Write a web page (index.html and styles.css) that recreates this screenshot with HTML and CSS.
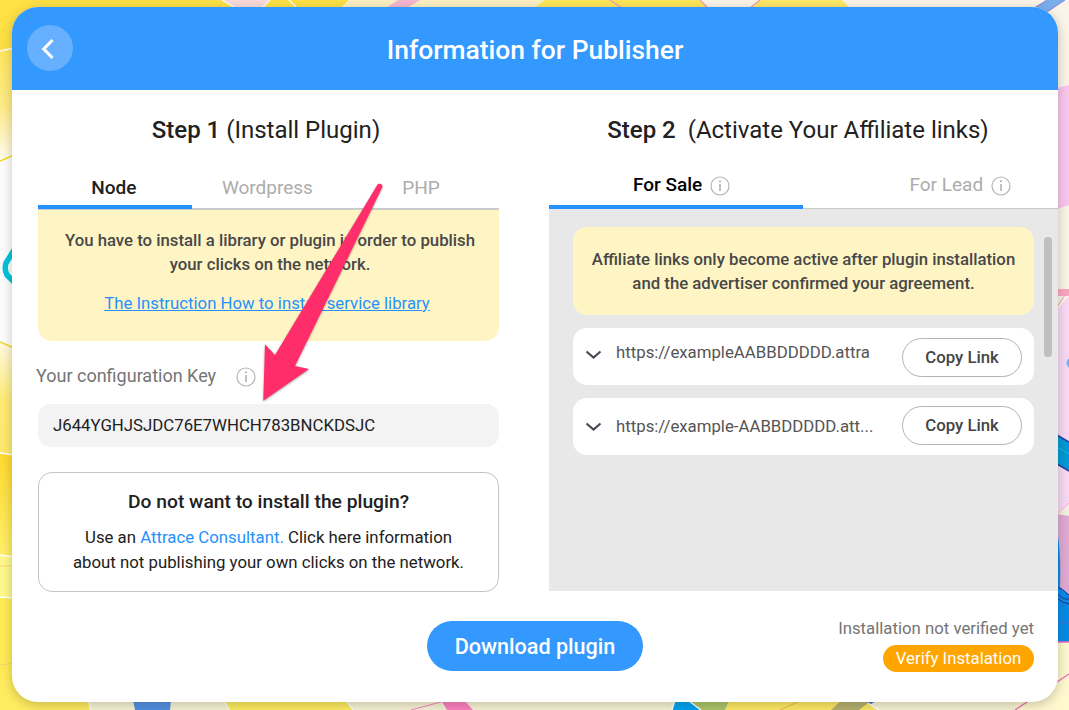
FILE: index.html
```html
<!DOCTYPE html>
<html lang="en">
<head>
<meta charset="utf-8">
<title>Information for Publisher</title>
<link rel="stylesheet" href="styles.css">
</head>
<body>
<svg class="backdrop" viewBox="0 0 1069 710" aria-hidden="true">
  <defs>
    <linearGradient id="sun" x1="0" y1="0" x2="0" y2="1"><stop offset="0" stop-color="#ffe65c"/><stop offset=".5" stop-color="#ffec86"/><stop offset="1" stop-color="#fffdf0"/></linearGradient>
    <linearGradient id="dawn" x1="0" y1="0" x2="0" y2="1"><stop offset="0" stop-color="#fffbe2"/><stop offset=".5" stop-color="#ffec78"/><stop offset="1" stop-color="#ffe96b"/></linearGradient>
    <linearGradient id="amber" x1="0" y1="0" x2="0" y2="1"><stop offset="0" stop-color="#ffd92e"/><stop offset="1" stop-color="#fff06a"/></linearGradient>
  </defs>
  <rect width="1069" height="710" fill="#fbf4e9"/>
  <path d="M0 0H350V20H40V48L0 51Z" fill="#ffe145"/>
  <path d="M0 51L14 48V155L0 161Z" fill="url(#sun)"/>
  <path d="M0 51L14 48" stroke="#fff" stroke-width="1.4"/>
  <path d="M0 161L14 155V348L0 342Z" fill="#fdfdfd"/>
  <path d="M0 342L14 348V455L0 452Z" fill="url(#dawn)"/>
  <path d="M0 161L14 155M0 342L14 348" stroke="#f4da24" stroke-width="1.6"/>
  <path d="M0 453L14 455V557L0 555Z" fill="url(#amber)"/>
  <path d="M0 555L14 557V598L0 597Z" fill="#fff98c"/>
  <path d="M0 597L14 598V680L40 702H90V710H0Z" fill="#ffed57"/>
  <path d="M0 453L14 455M0 555L14 557M0 597L14 598" stroke="#fff" stroke-width="1.6"/>
  <path d="M0 566L14 566M0 665L14 663" stroke="#ffc66f" stroke-width=".7"/>
  <path d="M16 247L6 263Q4 269 7 275L16 284" fill="none" stroke="#00c4dd" stroke-width="5.5"/>
  <path d="M222 0H270L262 8H234Z" fill="#fcd9da"/>
  <path d="M222 0L236 8M270 0L262 8M289 0L297 8M350 0L342 8" stroke="#fff" stroke-width="1.4"/>
  <path d="M350 0H545L534 8H342Z" fill="#fdf0c2"/>
  <path d="M398 0H420L407 8H386Z" fill="#f7b7cf"/>
  <path d="M545 0H700L708 8H534Z" fill="#ffe75a"/>
  <path d="M760 0H842L850 8H750Z" fill="#ffe968"/>
  <path d="M610 0L622 8M700 0L708 8M760 0L750 8" stroke="#ef9ab8" stroke-width="1.2"/>
  <path d="M1047 0H1065L1047 12L1033 8Z" fill="#78aeea"/>
  <path d="M1047 0L1033 9M1065 0L1047 12" stroke="#8b7fe0"/>
  <path d="M1057 88L1069 85V205L1057 209Z" fill="#fbc5ef"/>
  <path d="M1057 310L1069 296V530H1057Z" fill="#f8daf6"/>
  <path d="M1057 289H1069V296H1057Z" fill="#ffa6c4"/>
  <path d="M1057 307L1069 289" stroke="#f69abf"/>
  <circle cx="1072" cy="363" r="5.5" fill="#77b1ff"/>
  <path d="M1057 435L1069 442V471L1057 464Z" fill="#0099d6"/>
  <path d="M1057 435L1069 442M1057 464L1069 471" stroke="#293aa5" stroke-width="1.5"/>
  <path d="M1057 447L1069 454" stroke="#12b9df"/>
  <path d="M1057 514H1069V642H1057Z" fill="#dfaad4"/>
  <path d="M1057 514L1069 504V516L1057 514Z" fill="#f5f1e2"/>
  <path d="M1057 514L1069 503" stroke="#ffacd6"/>
  <path d="M1057 530Q1061 550 1060 587L1069 595V642H1057Z" fill="#078ae8"/>
  <path d="M1057 587Q1062 588 1069 595M1057 593Q1062 600 1069 599M1057 598Q1062 603 1069 604" fill="none" stroke="#26318f"/>
  <path d="M1057 623H1069" stroke="#3877d8"/>
  <path d="M1057 642H1069V710H1000V700H1040Z" fill="#fff9d0"/>
  <path d="M0 700H1015V710H0Z" fill="#f8f4d7"/>
  <path d="M1057 642H1069M1069 674L1015 710" stroke="#f36bc2" stroke-width="1.3"/>
  <path d="M0 680H14L40 700H88L91 710H0ZM224 700H346L353 710H228Z" fill="#ffed60"/>
  <path d="M88 700L91 710M224 700L229 710M346 700L353 710" stroke="#fff" stroke-width="1.5"/>
  <path d="M133 700H171L170 710H135Z" fill="#508fe5"/>
  <path d="M441 700H464L473 710H447Z" fill="#ff80c1"/>
  <path d="M411 710L441 702" stroke="#ff80c1"/>
  <path d="M675 700H689L701 710H672Z" fill="#00a3f3"/>
  <path d="M689 700H730L725 710H701Z" fill="#abc66a"/>
  <path d="M730 700H866L878 710H725Z" fill="#ffea64"/>
  <path d="M675 700L672 710M689 701L701 710M865 701L879 710" stroke="#fff" stroke-width="1.5"/>
  <path d="M842 700H866L868 703L859 710H831Z" fill="#b5b070"/>
  <path d="M865 701H876L871 704Z" fill="#5868ca"/>
  <path d="M780 710L800 701" stroke="#f2b45d"/>
</svg>

<main class="card">
  <header class="card-header">
    <button class="back" aria-label="Back">
      <svg width="46" height="46" viewBox="0 0 46 46"><path d="M25.500 15L16.800 24L25.500 33" fill="none" stroke="#fff" stroke-width="3.200"/></svg>
    </button>
    <h1 class="title">Information for Publisher</h1>
  </header>

  <div class="steps">
    <section class="step step-install">
      <h2 class="step-title"><b>Step 1</b> (Install Plugin)</h2>
      <nav class="tabs tabs-install">
        <a class="tab active">Node</a><a class="tab">Wordpress</a><a class="tab">PHP</a>
      </nav>
      <div class="notice notice-install">
        <p>You have to install a library or plugin in order to publish<br>your clicks on the network.</p>
        <a class="guide">The Instruction How to install service library</a>
      </div>
      <div class="key-label"><span>Your configuration Key</span>
        <svg class="info" viewBox="0 0 20 20"><circle cx="10" cy="10" r="9"/><path d="M10 8V15"/><circle class="dot" cx="10" cy="5.300" r="1.100"/></svg>
      </div>
      <div class="key">J644YGHJSJDC76E7WHCH783BNCKDSJC</div>
      <div class="consult">
        <h3>Do not want to install the plugin?</h3>
        <p>Use an <a>Attrace Consultant.</a> Click here information<br>about not publishing your own clicks on the network.</p>
      </div>
    </section>

    <section class="step step-activate">
      <h2 class="step-title"><b>Step 2</b>&nbsp; (Activate Your Affiliate links)</h2>
      <nav class="tabs tabs-activate">
        <a class="tab active">For Sale <svg class="info" viewBox="0 0 20 20"><circle cx="10" cy="10" r="9"/><path d="M10 8V15"/><circle class="dot" cx="10" cy="5.300" r="1.100"/></svg></a>
        <a class="tab lead">For Lead <svg class="info" viewBox="0 0 20 20"><circle cx="10" cy="10" r="9"/><path d="M10 8V15"/><circle class="dot" cx="10" cy="5.300" r="1.100"/></svg></a>
      </nav>
      <div class="panel">
        <div class="links">
          <div class="notice notice-activate"><p>Affiliate links only become active after plugin installation<br>and the advertiser confirmed your agreement.</p></div>
          <div class="link-row first">
            <svg class="chevron" viewBox="0 0 16 10"><path d="M1 1.500L8 7.500L15 1.500"/></svg>
            <span class="url">https://exampleAABBDDDDD.attra</span>
            <button class="copy">Copy Link</button>
          </div>
          <div class="link-row second">
            <svg class="chevron" viewBox="0 0 16 10"><path d="M1 1.500L8 7.500L15 1.500"/></svg>
            <span class="url">https://example-AABBDDDDD.att...</span>
            <button class="copy">Copy Link</button>
          </div>
        </div>
        <div class="scroll-thumb"></div>
      </div>
    </section>
  </div>

  <footer class="card-footer">
    <button class="download">Download plugin</button>
    <div class="status">
      <span class="status-text">Installation not verified yet</span>
      <button class="verify">Verify Instalation</button>
    </div>
  </footer>
</main>

<svg class="pointer" viewBox="0 0 122 220" aria-hidden="true">
  <path class="arrow" d="M117.300 5C118.800 2.300 123.300 4 122.300 7.300L35 186L49 189L3.300 220.700L5 164.300L15 175Z"/>
</svg>
</body>
</html>
```

FILE: styles.css
```css
* { box-sizing: border-box; }
body { margin: 0; width: 1069px; height: 710px; overflow: hidden; position: relative; padding: 7px 11px 0 12px; font-family: Roboto, sans-serif; color: #212121; }
h1, h2, h3, p { margin: 0; font-weight: 400; }
button { font: inherit; border: 0; padding: 0; }
.backdrop { position: absolute; left: 0; top: 0; width: 1069px; height: 710px; }
.card { position: relative; width: 1046px; height: 695px; border-radius: 26px; background: #fff; overflow: hidden; box-shadow: 0 3px 12px rgba(40, 40, 20, .26); }
.card-header { display: flex; align-items: center; height: 83px; background: #3399ff; padding: 0 61px 0 15px; }
.back { width: 46px; height: 46px; border-radius: 50%; background: #66b0ff; margin-top: -1px; }
.back svg { display: block; }
.title { flex: 1; text-align: center; color: #fff; font-size: 26.400px; font-weight: 500; line-height: 32px; padding-top: 2px; }
.steps { display: flex; height: 502px; justify-content: space-between; }
.step-install { width: 461px; margin-left: 26px; }
.step-activate { width: 509px; }
.step-title { height: 80px; padding-top: 24px; line-height: 32px; font-size: 24px; text-align: center; white-space: nowrap; }
.step-title b { font-weight: 500; }
.step-install .step-title { padding-right: 5px; }
.step-activate .step-title { padding-right: 11px; }
.tabs { display: flex; height: 40px; font-size: 19px; line-height: 24px; color: #acacac; }
.tabs-install { border-bottom: 2px solid #cbcbcb; }
.tabs-install .tab { width: 153.600px; text-align: center; height: 39px; padding: 6px 2px 0 0; }
.tabs .active { color: #212121; font-weight: 500; border-bottom: 4px solid #2491ff; }
.tabs-activate { border-bottom: 1px solid #c8c8c8; height: 39px; }
.tabs-activate .tab { width: 255px; height: 39px; padding: 3px 0 0 84px; display: flex; gap: 8px; }
.tabs-activate .active { color: #000; }
.tabs-activate .lead { padding-left: 106px; }
.info { width: 20px; height: 20px; fill: none; stroke: #b5b5b5; stroke-width: 1.200; margin-top: 3px; flex: none; }
.info path { stroke-width: 1.700; }
.info .dot { fill: #b5b5b5; stroke: none; }
.notice { background: #fff5c4; color: #484848; font-size: 16.750px; line-height: 24px; text-align: center; }
.notice p { font-weight: 500; }
.notice-install { height: 131px; border-radius: 0 0 14px 14px; padding: 18px 0 0 3px; }
.guide { display: block; margin-top: 15px; color: #2491ff; text-decoration: underline; padding-right: 6px; }
.key-label { display: flex; gap: 20px; height: 63px; padding-top: 23px; margin-left: -2px; color: #757575; font-size: 18px; line-height: 24px; }
.key { height: 43px; border-radius: 13px; background: #f3f3f3; padding-left: 15px; line-height: 42px; font-size: 16.800px; }
.consult { height: 120px; margin-top: 25px; border: 1.500px solid #c4c4c4; border-radius: 14px; text-align: center; padding-top: 16px; font-size: 16.800px; line-height: 25px; }
.consult h3 { font-size: 19.250px; font-weight: 500; line-height: 26px; margin-bottom: 10px; }
.consult a { color: #2491ff; }
.panel { height: 382px; background: #e8e8e8; display: flex; gap: 10px; padding: 18px 0 0 24px; }
.links { width: 461px; }
.notice-activate { height: 88px; border-radius: 14px; padding-top: 20px; }
.link-row { display: flex; align-items: center; height: 57px; margin-top: 13px; background: #fff; border-radius: 14px; padding: 0 12px; color: #555; font-size: 16.800px; }
.chevron { width: 17px; height: 10px; fill: none; stroke: #454b53; stroke-width: 2.200; margin-right: 14px; }
.url { flex: 1; white-space: nowrap; }
.first .url { margin-top: -10px; }
.first .chevron { margin-top: -4px; }
.first .copy { margin-top: 2px; }
.second .url, .second .copy { margin-top: -2px; }
.copy { width: 120px; height: 39px; padding-bottom: 2px; border: 1.500px solid #b3b3b8; border-radius: 20px; background: #fff; color: #444; font-weight: 500; }
.scroll-thumb { width: 8px; height: 120px; margin-top: 10px; border-radius: 4px; background: #bfbfbf; }
.card-footer { height: 110px; display: flex; justify-content: flex-end; padding: 29px 24px 0 0; }
.download { width: 216px; height: 50px; border-radius: 25px; background: #3399ff; color: #fff; font-size: 21.600px; font-weight: 500; }
.status { width: 391px; display: flex; flex-direction: column; align-items: flex-end; color: #757575; font-size: 16.750px; }
.status-text { line-height: 14px; margin-bottom: 10px; }
.verify { width: 151px; height: 27px; border-radius: 13.500px; background: #ffa500; color: #fff; padding-bottom: 2px; }
.pointer { position: absolute; left: 260px; top: 180px; width: 122px; height: 220px; overflow: visible; }
.arrow { fill: #ff2e6b; filter: drop-shadow(0 1px 1px rgba(0, 0, 0, .35)); }
```
